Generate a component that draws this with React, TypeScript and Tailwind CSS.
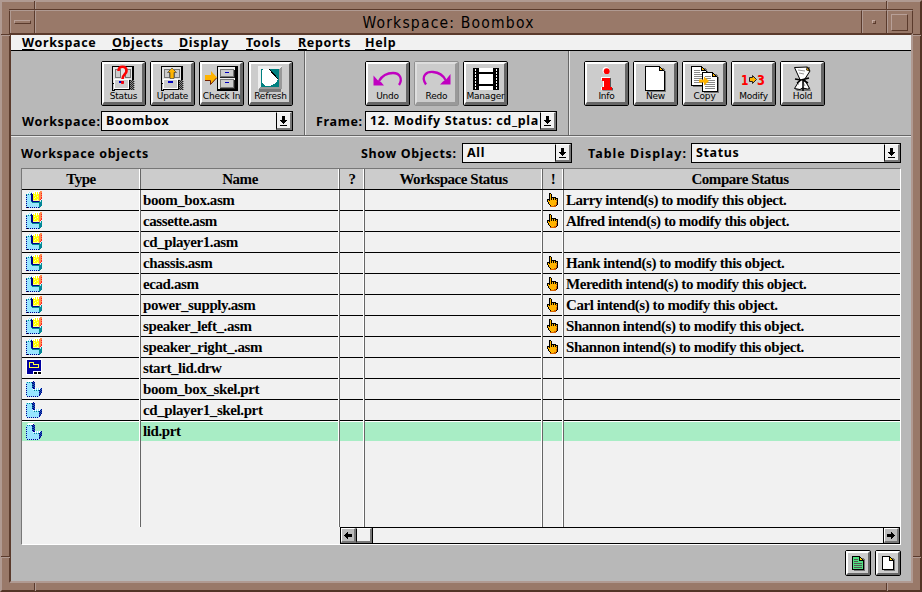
import React from "react";

const UI = "font-['Noto_Sans','DejaVu_Sans',sans-serif]";

/* Draws a small bitmap: one character per pixel, looked up in a palette. */
function Sprite({ rows, palette, className }: { rows: string[]; palette: Record<string, string>; className?: string }) {
  const w = Math.max(...rows.map((r) => r.length));
  const cells: React.ReactNode[] = [];
  rows.forEach((row, y) => {
    let x = 0;
    while (x < row.length) {
      const c = row[x];
      let end = x + 1;
      while (end < row.length && row[end] === c) end++;
      if (palette[c]) cells.push(<rect key={`${x}-${y}`} x={x} y={y} width={end - x} height={1} fill={palette[c]} />);
      x = end;
    }
  });
  return (
    <svg width={w} height={rows.length} shapeRendering="crispEdges" className={`block shrink-0 ${className ?? ""}`}>
      {cells}
    </svg>
  );
}

const colors: Record<string, string> = {
  k: "#000000",
  w: "#ffffff",
  c: "#99e6ff",
  t: "#008c94",
  n: "#000090",
  y: "#ffff00",
  p: "#ffff99",
  o: "#ff8c50",
  r: "#ff2020",
  b: "#2060b0",
  g: "#ffb400",
  d: "#d06000",
};

const asm = [
  "........wwwwwwoo",
  "..wcwcwwwywywooo",
  ".wcwcnwywywywoor",
  "tctctnnyyypyyooo",
  "nccccnnypyyyyoor",
  "cccccnnyyyypyooo",
  "nccccnnyypyyyoor",
  "cccccnnypyyyyoor",
  "nccccnnyyyypyor.",
  "cccccnnppppppo.t",
  "ncccctnnnnnnntct",
  "cccccctttttttttt",
  "nccccccccccccttt",
  "ccccccccccccctbt",
  "nccccccccccccttt",
  "ccccccccccccctt.",
  "nkncncncncncnt..",
];

const prt = [
  "..wwwwww........",
  ".wwwwwwn........",
  "ctctctnbn.......",
  "ccccccnnb.......",
  "nccccctbn.......",
  "ccccccnnb.......",
  "nccccctbn.......",
  "ccccccnnb.......",
  "nccccccnnwcwcwcn",
  "cccccccwcwcwcwnb",
  "nccccccctctctnbn",
  "cccccccccccccbnb",
  "nccccccccccccnbn",
  "cccccccccccccbn.",
  "nccccccccccccnb.",
  "cccccccccccccn..",
  ".ncncncncncnc...",
];

const hand = [
  "..kk.......",
  "..kgk......",
  "..kgk......",
  "..kgk......",
  "..kgkkkkk..",
  "..kgkgkgkkk",
  "kkkgkgkgkgk",
  "kgkggggggdk",
  "kgggggggggk",
  ".kgggggggdk",
  ".kgggggggdk",
  "..kggggggdk",
  "...kgggddk.",
  "...dddddd..",
];

function TypeIcon({ kind }: { kind: string }) {
  if (kind === "asm") return <Sprite rows={asm} palette={colors} />;
  if (kind === "prt") return <Sprite rows={prt} palette={colors} />;
  return (
    <svg width="16" height="16" className="block" shapeRendering="crispEdges">
      <path d="M0 0h16v16H0z" fill="#fff" />
      <path d="M1 1h14v11H7v3H1z" fill="#0000a0" />
      <path d="M3.500 3.500h4v2h5v3h-9z" fill="none" stroke="#ffff40" />
      <path d="M8 13h3v2H8zM12 13h3v2h-3z" fill="#000" />
    </svg>
  );
}

function OpenCabinet() {
  return (
    <g shapeRendering="crispEdges">
      <path d="M11 5h22v18H11z" fill="#000" />
      <path d="M12 6h19v16H12z" fill="#e4e4e4" />
      <path d="M14.500 8.500h5v8h-5zM24.500 8.500h5v8h-5z" fill="#ccc" stroke="#777" />
      <path d="M28 19h5v10h-5z" fill="#222" />
      {[19, 21, 23, 25, 27].map((y) => (
        <path key={y} d={`M28 ${y + 0.5}h6M29 ${y + 1.5}h6`} stroke="#888" strokeDasharray="1 1" />
      ))}
      <path d="M11.500 5v24h2" fill="none" stroke="#000" />
      <path d="M13.500 18.500h14v9h-14z" fill="#ccc" stroke="#fff" />
      <path d="M13 28.500h15v-10" fill="none" stroke="#000" />
      <path d="M18 20h5v2h-5z" fill="#0000c0" />
    </g>
  );
}

function PageShape({ x, y, w, h, lines }: { x: number; y: number; w: number; h: number; lines?: boolean }) {
  return (
    <g transform={`translate(${x} ${y})`} shapeRendering="crispEdges">
      <path d={`M2 2h${w - 3}l2 4v${h - 5}H2z`} fill="#777" />
      <path d={`M.5 .5h${w - 6}l5 5v${h - 6}H.5z`} fill="#fff" stroke="#000" />
      <path d={`M${w - 5.5} .5v4h4z`} fill="#ffb400" stroke="#000" />
      {lines && <path d={`M3 4.500h6M3 6.500h6M3 8.500h${w - 6}M3 10.500h${w - 6}M3 12.500h${w - 6}M3 14.500h${w - 6}M3 16.500h${w - 6}`} stroke="#888" />}
    </g>
  );
}

const art: Record<string, React.ReactNode> = {
  Status: (
    <>
      <OpenCabinet />
      <path d="M17.500 10q0-4.200 4-4.200t4 4.200c0 3-4 3.500-4 8M21.500 20v3" fill="none" stroke="#f00" strokeWidth="2.600" />
    </>
  ),
  Update: (
    <>
      <OpenCabinet />
      <path d="M22 7l4.500 4.500h-2.500v6h-4v-6h-2.500z" fill="#ffb400" stroke="#333" strokeWidth=".6" />
    </>
  ),
  "Check In": (
    <>
      <g shapeRendering="crispEdges">
        <path d="M18 5h21v25H18z" fill="#000" />
        <path d="M19 6h17v22H19z" fill="#eee" />
        <path d="M21.500 8.500h13v7h-13zM21.500 18.500h13v8h-13z" fill="#ccc" stroke="#777" />
        <path d="M21 16.500h14v-8M21 27.500h14v-9" fill="none" stroke="#222" />
        <path d="M26 11h4v1h-4zM26 21h4v1h-4z" fill="#0000c0" />
      </g>
      <path d="M6 14h6v-4l6 6.500-6 6.500v-4H6z" fill="#ffb400" />
      <path d="M6 19.500h5.500v4l6-6.500" fill="none" stroke="#702000" />
    </>
  ),
  Refresh: (
    <g shapeRendering="crispEdges">
      <path d="M11 28h22v3H11z" fill="#777" />
      <path d="M10 5h24v23H10z" fill="#eee" />
      <path d="M34 5v23H10l3-3h18V8z" fill="#999" />
      <path d="M13 8h18v18H13z" fill="#008080" />
      <path d="M14 9l2-1h5l9 10-2 4-6 3h-5l-3-3z" fill="#fff" />
      <path d="M21 8l9 10" stroke="#000" />
    </g>
  ),
  Undo: (
    <>
      <path d="M8.500 14.500v10h10.500l-3-3.500-3.500-2z" fill="#c000c0" />
      <path d="M14 20c3-5 8-8 14-8 7 0 10 6 6 12" fill="none" stroke="#c000c0" strokeWidth="2.300" />
    </>
  ),
  Redo: (
    <>
      <path d="M36.500 13v10.500H26l3-3 3.500-2.500z" fill="#c000c0" />
      <path d="M12 23.500c-6-9 1-13 7-12.500 6 .5 10 3 12.500 8" fill="none" stroke="#c000c0" strokeWidth="2.300" />
    </>
  ),
  Manager: (
    <g shapeRendering="crispEdges">
      <path d="M10 7h26v22H10z" fill="#000" />
      <path d="M16 7h14v4H16zM16 13h14v10H16zM16 25h14v4H16z" fill="#fff" />
      {[8, 11, 14, 17, 20, 23, 26].map((y) => (
        <path key={y} d={`M12 ${y}h1v2h-1zM33 ${y}h1v2h-1z`} fill="#fff" />
      ))}
    </g>
  ),
  Info: (
    <>
      <circle cx="22" cy="9.500" r="3.500" fill="#fff" />
      <path d="M17 16h9v10h2v3H17v-3h2v-7h-2z" fill="#fff" />
      <path d="M19 17h8v10h2v2.500H18.500V27H21v-7h-2z" fill="#555" />
      <circle cx="22.700" cy="10.200" r="2.900" fill="#f00" />
      <path d="M18 17h8v9h2v3H18v-3h2v-6h-2z" fill="#f00" />
    </>
  ),
  New: <PageShape x={12} y={5} w={20} h={25} />,
  Copy: (
    <>
      <PageShape x={9} y={5} w={16} h={20} lines />
      <PageShape x={20} y={11} w={16} h={20} lines />
      <path d="M17 18.500h5v-3l5 4.500-5 4.500v-3h-5z" fill="#ffb400" />
    </>
  ),
  Modify: (
    <>
      <text x="10" y="23.500" fontFamily="DejaVu Sans" fontWeight="bold" fontSize="14" textLength="8" lengthAdjust="spacingAndGlyphs" fill="#f00">1</text>
      <text x="26" y="23.500" fontFamily="DejaVu Sans" fontWeight="bold" fontSize="14" textLength="8.500" lengthAdjust="spacingAndGlyphs" fill="#f00">3</text>
      <path d="M18.500 16.500h3v-2l4 4-4 4v-2h-3z" fill="#ffb400" stroke="#222" />
    </>
  ),
  Hold: (
    <>
      <path d="M17 30h14l-1-3-5-8 5-9v-4H16l1 3 4 9-6 10z" fill="#777" />
      <path d="M14.500 6.500l13-.5 2.500 4-5.500 8.500 5 9-2 .5-5-1-2.500 1.500-5.500-1 5.500-9z" fill="#fff" stroke="#000" />
      <path d="M27 6l2.500 4-3-1z" fill="#ffb400" stroke="#000" strokeWidth=".7" />
      <path d="M18 9l7 1M19 12l5 1M18 24l1-3M25 25l-2-4" stroke="#999" />
      <path d="M15 18l6 1 8-2M21 19l-4 3M23 19l5 3M23 18v12" stroke="#000" strokeWidth="1.500" fill="none" />
    </>
  ),
};

function ToolButton({ label, disabled }: { label: string; disabled?: boolean }) {
  return (
    <button
      className={`relative h-[45px] w-[45px] shrink-0 rounded-[2px] border ${disabled ? "border-[#909090]" : "border-black"} bg-[#cccccc]`}
    >
      <span
        className={`block h-full w-full border-2 border-r-[3px] border-b-[3px] ${
          disabled
            ? "border-t-[#dedede] border-r-[#999] border-b-[#999] border-l-[#dedede]"
            : "border-t-white border-r-[#666] border-b-[#666] border-l-white"
        }`}
      />
      <svg width="45" height="45" className="absolute -top-px -left-px">
        {art[label]}
      </svg>
      <span className="absolute -right-px bottom-[3px] -left-px text-center font-['DejaVu_Sans',sans-serif] text-[9px] leading-[11px] font-normal tracking-[-0.2px] whitespace-nowrap text-black">
        {label}
      </span>
    </button>
  );
}

function Select({ value, className }: { value: string; className: string }) {
  return (
    <div className={`flex h-5 shrink-0 border border-black bg-[#f1f1f1] ${className}`}>
      <span className="min-w-0 flex-1 pl-1 leading-[17px] whitespace-nowrap">{value}</span>
      <span className="flex w-4 items-center justify-center border-t border-r-2 border-b-2 border-l border-t-white border-r-[#777] border-b-[#777] border-l-black bg-[#f1f1f1]">
        <svg width="7" height="10" shapeRendering="crispEdges">
          <path d="M2 0h3v4h2v1H6v1H5v1H4v1H3V7H2V6H1V5H0V4h2zM0 9h7v1H0z" />
        </svg>
      </span>
    </div>
  );
}

const menus: [string, string][] = [
  ["Workspace", "w-[90px]"],
  ["Objects", "w-[67px]"],
  ["Display", "w-[67px]"],
  ["Tools", "w-[52px]"],
  ["Reports", "w-[67px]"],
  ["Help", "w-[60px]"],
];

const objects: [string, string, string?][] = [
  ["asm", "boom_box.asm", "Larry"],
  ["asm", "cassette.asm", "Alfred"],
  ["asm", "cd_player1.asm"],
  ["asm", "chassis.asm", "Hank"],
  ["asm", "ecad.asm", "Meredith"],
  ["asm", "power_supply.asm", "Carl"],
  ["asm", "speaker_left_.asm", "Shannon"],
  ["asm", "speaker_right_.asm", "Shannon"],
  ["drw", "start_lid.drw"],
  ["prt", "boom_box_skel.prt"],
  ["prt", "cd_player1_skel.prt"],
  ["prt", "lid.prt"],
];

const grid = "grid grid-cols-[119px_199px_25px_178px_21px_336px]";
const rule = "border-r border-[#666] shadow-[inset_-1px_0_#fff]";

function TitleBar() {
  return (
    <div className="flex h-6 border-t border-[#5a3a2c]">
      <div className="flex w-[26px] items-center justify-center border-t border-r border-l border-t-[#b09a92] border-r-[#5a3a2c] border-l-[#5a3a2c] shadow-[inset_1px_0_#b09a92]">
        <span className="h-1 w-[17px] border border-t-[#b8a098] border-r-[#5a3a2c] border-b-[#5a3a2c] border-l-[#b8a098]" />
      </div>
      <div className="flex-1 border-t border-l border-[#b09a92] text-center font-['DejaVu_Sans_Condensed','DejaVu_Sans',sans-serif] text-[15.5px] leading-[24px] tracking-[1.2px] text-black">
        Workspace: Boombox
      </div>
      <div className="flex w-[25px] items-center justify-center border-t border-l border-t-[#b09a92] border-l-[#5a3a2c] shadow-[inset_1px_0_#b09a92]">
        <span className="h-1 w-1 border border-t-[#c4aaa0] border-r-[#5a3a2c] border-b-[#5a3a2c] border-l-[#c4aaa0]" />
      </div>
      <div className="flex w-[27px] items-center justify-center border-t border-r border-l border-t-[#b09a92] border-r-[#5a3a2c] border-l-[#5a3a2c] shadow-[inset_1px_0_#b09a92]">
        <span className="h-[17px] w-[17px] border border-t-[#b8a098] border-r-[#5a3a2c] border-b-[#5a3a2c] border-l-[#b8a098]" />
      </div>
    </div>
  );
}

/* Notches that mark the corner grips on the window frame. */
function FrameNotches() {
  const v = "absolute w-[2px] border-l border-l-[#5a3a2c] bg-[#b09a92]";
  const h = "absolute h-[2px] border-t border-t-[#5a3a2c] bg-[#b09a92]";
  return (
    <>
      <i className={`${v} -top-px left-[32px] h-2`} />
      <i className={`${v} -top-px left-[884px] h-2`} />
      <i className={`${v} top-[581px] left-[32px] h-2`} />
      <i className={`${v} top-[581px] left-[884px] h-2`} />
      <i className={`${h} top-[32px] -left-px w-[9px]`} />
      <i className={`${h} top-[32px] left-[911px] w-2`} />
      <i className={`${h} top-[554px] -left-px w-[9px]`} />
      <i className={`${h} top-[554px] left-[911px] w-2`} />
    </>
  );
}

export default function App() {
  return (
    <div className="relative flex h-[592px] w-[922px] flex-col border-2 border-t-[#b09a92] border-r-[#523527] border-b-[#523527] border-l-[#b09a92] bg-[#997969] px-[7px] pt-[7px] pb-[7px]">
      <TitleBar />
      <div
        className={`flex flex-1 flex-col border-2 border-t-[#5a3a2c] border-r-[#b09a92] border-b-[#b09a92] border-l-[#5a3a2c] bg-[#b8b8b8] ${UI} text-[12.5px] font-bold tracking-[0.65px] text-black`}
      >
        <nav className="flex h-4 border-b border-black bg-[#f1f1f1] pl-[11px] leading-[15px]">
          {menus.map(([m, w]) => (
            <span key={m} className={w}>
              <u className="underline-offset-2">{m[0]}</u>
              {m.slice(1)}
            </span>
          ))}
        </nav>

        <div className="flex h-[85px] border-b border-[#666]">
          <section className="w-[294px] border-r border-[#666] pt-[10px]">
            <div className="flex gap-1 pl-[90px]">
              {["Status", "Update", "Check In", "Refresh"].map((l) => (
                <ToolButton key={l} label={l} />
              ))}
            </div>
            <div className="mt-[5px] flex">
              <label className="w-[90px] pl-[11px] leading-[22px] whitespace-nowrap">Workspace:</label>
              <Select value="Boombox" className="w-48" />
            </div>
          </section>
          <section className="w-[264px] border-r border-l border-r-[#666] border-l-[#e8e8e8] pt-[10px]">
            <div className="flex gap-1 pl-[59px]">
              <ToolButton label="Undo" />
              <ToolButton label="Redo" disabled />
              <ToolButton label="Manager" />
            </div>
            <div className="mt-[5px] flex">
              <label className="w-[59px] pl-[10px] leading-[22px]">Frame:</label>
              <Select value="12. Modify Status: cd_pla" className="w-48" />
            </div>
          </section>
          <section className="flex flex-1 gap-1 border-l border-[#e8e8e8] pt-[10px] pl-[14px]">
            {["Info", "New", "Copy", "Modify", "Hold"].map((l) => (
              <ToolButton key={l} label={l} />
            ))}
          </section>
        </div>

        <div className="flex h-8 border-t border-[#e8e8e8] pt-[6px]">
          <span className="w-[350px] pl-[10px] leading-[22px]">Workspace objects</span>
          <label className="w-[101px] leading-[22px] whitespace-nowrap">Show Objects:</label>
          <Select value="All" className="w-[110px]" />
          <label className="ml-[15px] w-[104px] pl-px leading-[22px] tracking-[1px] whitespace-nowrap">Table Display:</label>
          <Select value="Status" className="w-[210px]" />
        </div>

        <div className="mx-[10px] flex h-[377px] flex-col border border-t-[#777] border-r-white border-b-white border-l-[#777] bg-[#f1f1f1] font-['Liberation_Serif',serif] text-[15px] tracking-[-0.45px]">
          <div className={`${grid} h-[21px] shrink-0 border-b border-black bg-[#cccccc] text-center leading-5`}>
            {["Type", "Name", "?", "Workspace Status", "!", "Compare Status"].map((t, i) => (
              <span key={t} className={i < 5 ? rule : "pl-[16px]"}>
                {t}
              </span>
            ))}
          </div>
          <div className="flex h-[337px] flex-col">
            {objects.map(([kind, name, who], r) => (
              <div key={name} className={`${grid} h-[21px] shrink-0 leading-[20px]`}>
                {[0, 1, 2, 3, 4, 5].map((c) => (
                  <div key={c} className={`flex h-[21px] ${c < 5 ? rule : ""}`}>
                    <div
                      className={`flex flex-1 whitespace-nowrap ${c < 5 ? "mr-px" : ""} ${
                        r < 11 ? "border-b border-black" : "mb-px border-t border-white bg-[#a8edc5] leading-[18px]"
                      }`}
                    >
                      {c === 0 && (
                        <span className="pt-px pl-1">
                          <TypeIcon kind={kind} />
                        </span>
                      )}
                      {c === 1 && <span className="pl-[2px] tracking-[-0.4px]">{name}</span>}
                      {c === 4 && who && (
                        <span className="pt-[3px] pl-1">
                          <Sprite rows={hand} palette={colors} />
                        </span>
                      )}
                      {c === 5 && who && <span className="pl-[2px]">{`${who} intend(s) to modify this object.`}</span>}
                    </div>
                  </div>
                ))}
              </div>
            ))}
            <div className={`${grid} flex-1`}>
              {[0, 1, 2, 3, 4].map((c) => (
                <span key={c} className={rule} />
              ))}
            </div>
          </div>
          <div className="ml-[318px] flex h-[17px] border border-black">
            <span className="flex w-[15px] items-center justify-center border-t border-r-2 border-b-2 border-l border-t-white border-r-[#777] border-b-[#777] border-l-white bg-[#bbb]">
              <svg width="8" height="7" shapeRendering="crispEdges">
                <path d="M0 3h1V2h1V1h1V0h1v2h4v3H4v2H3V6H2V5H1V4H0z" />
              </svg>
            </span>
            <span className="w-4 border-t border-r-2 border-b-2 border-l border-t-white border-r-[#777] border-b-[#777] border-l-black bg-[#f1f1f1]" />
            <span className="flex-1 border-r border-l border-black" />
            <span className="flex w-[15px] items-center justify-center border-t border-r-2 border-b-2 border-l border-t-white border-r-[#777] border-b-[#777] border-l-white bg-[#bbb]">
              <svg width="8" height="7" shapeRendering="crispEdges">
                <path d="M8 3H7V2H6V1H5V0H4v2H0v3h4v2h1V6h1V5h1V4h1z" />
              </svg>
            </span>
          </div>
        </div>

        <div className="mt-[5px] mr-[10px] flex justify-end gap-1">
          {["#50e080", "#ffffff"].map((fill) => (
            <button key={fill} className="h-[26px] w-[26px] rounded-[2px] border border-black bg-[#ccc]">
              <span className="flex h-full w-full items-center justify-center border-2 border-t-white border-r-[#666] border-b-[#666] border-l-white">
                <svg width="13" height="15" shapeRendering="crispEdges">
                  <path d="M2 2h9l2 2v11H2z" fill="#777" />
                  <path d="M.5 .5h7l4 4v9H.5z" fill={fill} stroke="#000" />
                  <path d="M7.500 .5v4h4z" fill="#ffd000" stroke="#000" />
                  {fill !== "#ffffff" && <path d="M2 3.500h4M2 5.500h4M2 7.500h8M2 9.500h8M2 11.500h8" stroke="#555" />}
                </svg>
              </span>
            </button>
          ))}
        </div>
      </div>
      <FrameNotches />
    </div>
  );
}
